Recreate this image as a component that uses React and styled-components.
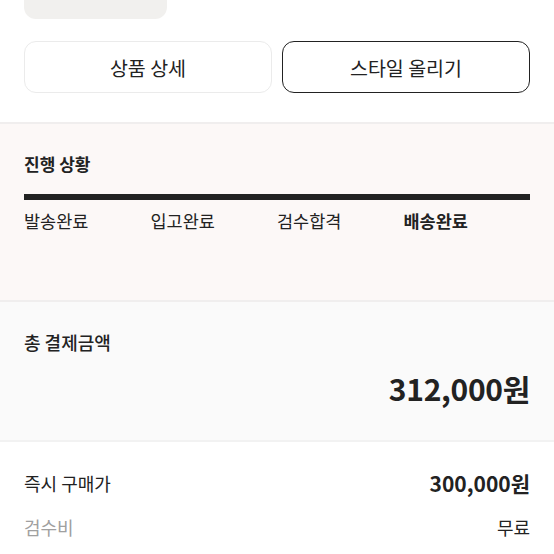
import styled, { createGlobalStyle } from 'styled-components';

const GlobalStyle = createGlobalStyle`
  html, body {
    margin: 0;
    padding: 0;
    background: #fff;
  }
  body {
    font-family: "Noto Sans CJK KR", "Noto Sans", sans-serif;
    color: #222;
  }
`;

const Page = styled.div`
  width: 554px;
  overflow: hidden;
`;

const Thumb = styled.div`
  width: 143px;
  height: 19px;
  margin-left: 24px;
  background: #f1f0ee;
  border-radius: 0 0 12px 12px;
`;

const ButtonRow = styled.div`
  display: grid;
  grid-template-columns: 1fr 1fr;
  gap: 10px;
  padding: 22px 24px 29px;
`;

const ActionButton = styled.button`
  height: 52px;
  border-radius: 12px;
  background: #fff;
  border: 1px solid ${(p) => (p.$dark ? '#222' : '#ebebeb')};
  font-family: inherit;
  font-size: 19.5px;
  color: #222;
  padding: 0;
`;

const Section = styled.section`
  background: ${(p) => p.$bg};
  border-top: 2px solid #f0eeee;
  padding: ${(p) => p.$pad};
`;

const Title = styled.h3`
  margin: 0;
  font-size: 17px;
  font-weight: 700;
  line-height: 22px;
`;

const Bar = styled.div`
  height: 6px;
  background: #222;
  margin-top: 19px;
`;

const Steps = styled.div`
  display: grid;
  grid-template-columns: repeat(4, 1fr);
  margin-top: 10px;
`;

const Step = styled.span`
  font-size: 17.5px;
  line-height: 22px;
  font-weight: ${(p) => (p.$active ? 700 : 400)};
  color: #222;
`;

const TotalLabel = styled.div`
  font-size: 18px;
  font-weight: 500;
  line-height: 22px;
`;

const TotalAmount = styled.div`
  text-align: right;
  font-size: 30px;
  font-weight: 700;
  line-height: 40px;
  margin-top: 15px;
  letter-spacing: -0.3px;
`;

const Rows = styled.div`
  display: flex;
  flex-direction: column;
  gap: 20px;
  padding: 29px 24px 20px;
  border-top: 2px solid #f2f2f2;
`;

const Row = styled.div`
  display: flex;
  justify-content: space-between;
  align-items: center;
  font-size: 18px;
  line-height: 24px;
`;

const RowLabel = styled.span`
  color: ${(p) => (p.$muted ? '#a0a0a0' : '#222')};
`;

const RowValue = styled.span`
  font-weight: ${(p) => (p.$bold ? 700 : 400)};
  font-size: ${(p) => (p.$bold ? '21px' : '18px')};
`;

const steps = ['발송완료', '입고완료', '검수합격', '배송완료'];

export default function App() {
  return (
    <Page>
      <GlobalStyle />
      <Thumb />
      <ButtonRow>
        <ActionButton>상품 상세</ActionButton>
        <ActionButton $dark>스타일 올리기</ActionButton>
      </ButtonRow>

      <Section $bg="#fcf8f7" $pad="29px 24px 68px">
        <Title>진행 상황</Title>
        <Bar />
        <Steps>
          {steps.map((s, i) => (
            <Step key={s} $active={i === steps.length - 1}>{s}</Step>
          ))}
        </Steps>
      </Section>

      <Section $bg="#fafafa" $pad="29px 24px 32px">
        <TotalLabel>총 결제금액</TotalLabel>
        <TotalAmount>312,000원</TotalAmount>
      </Section>

      <Rows>
        <Row>
          <RowLabel>즉시 구매가</RowLabel>
          <RowValue $bold>300,000원</RowValue>
        </Row>
        <Row>
          <RowLabel $muted>검수비</RowLabel>
          <RowValue>무료</RowValue>
        </Row>
      </Rows>
    </Page>
  );
}
